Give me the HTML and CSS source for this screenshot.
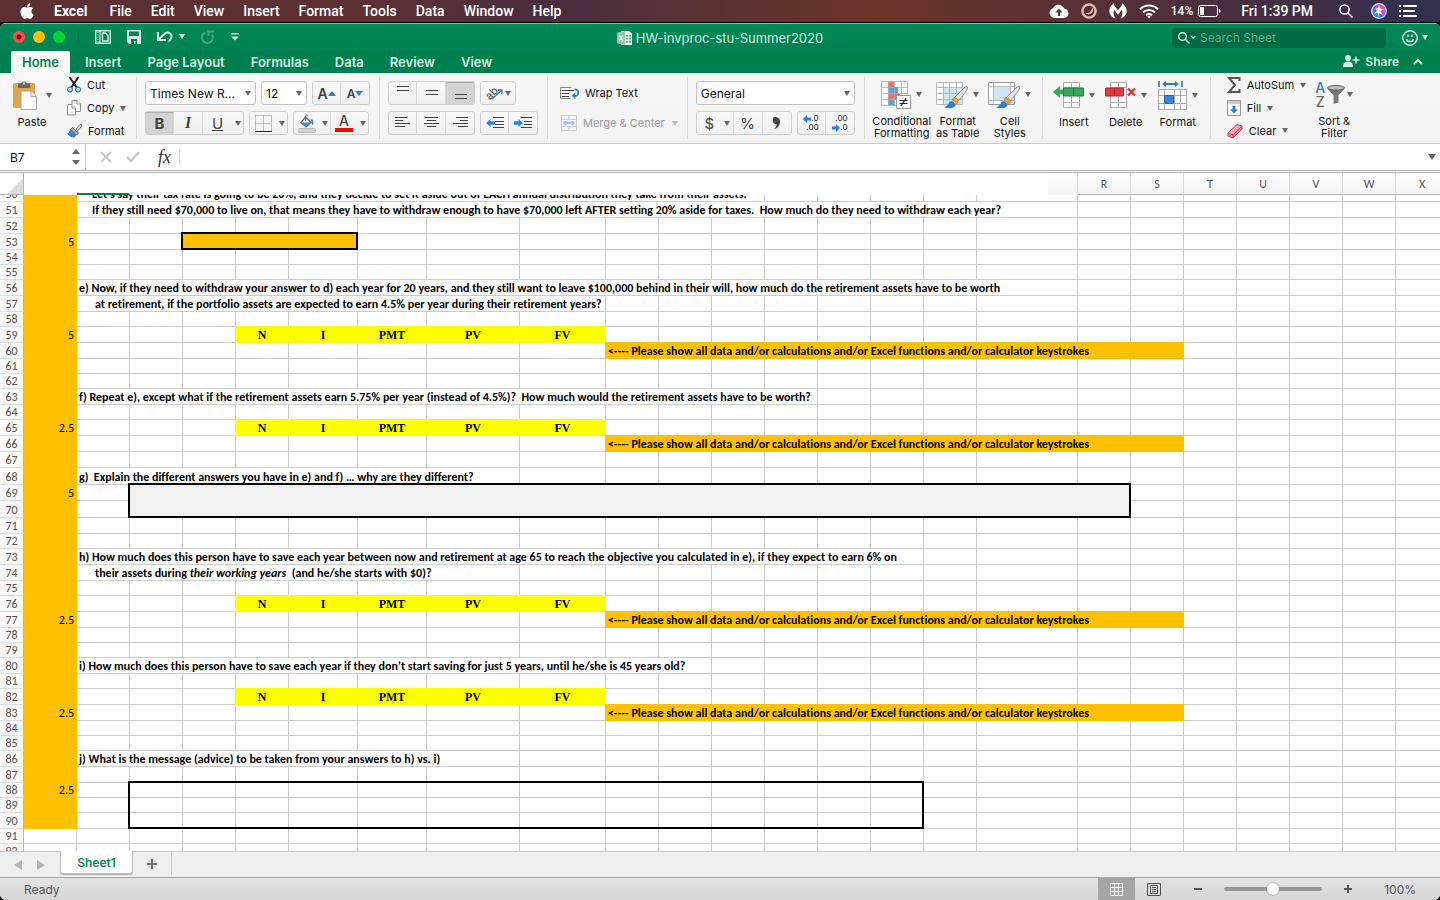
FILE: index.html
```html
<!DOCTYPE html>
<html lang="en">
<head>
  <meta charset="UTF-8" />
  <meta name="viewport" content="width=device-width, initial-scale=1.0"/>
  <title>HW-invproc-stu-Summer2020</title>
  <link rel="stylesheet" href="styles.css">
</head>
<body>
  <header class="menubar">
    <nav class="menus">
      <a href="#" class="apple" aria-label="Apple menu"><svg width="14" height="18" viewBox="0 0 384 512" fill="#fff"><path d="M318.7 268.7c-.2-36.7 16.4-64.4 50-84.8-18.8-26.9-47.2-41.7-84.7-44.6-35.5-2.8-74.3 20.7-88.5 20.7-15 0-49.4-19.7-76.4-19.7C63.3 141.2 4 184.8 4 273.5q0 39.3 14.4 81.2c12.8 36.7 59 126.7 107.2 125.2 25.2-.6 43-17.9 75.8-17.9 31.8 0 48.3 17.9 76.4 17.9 48.6-.7 90.4-82.5 102.6-119.3-65.2-30.7-61.7-90-61.7-91.9zm-56.6-164.2c27.3-32.4 24.8-61.9 24-72.5-24.1 1.4-52 16.4-67.9 34.9-17.5 19.8-27.8 44.3-25.6 71.9 26.1 2 49.9-11.4 69.5-34.3z"/></svg></a>
      <a href="#" class="app">Excel</a>
      <a href="#">File</a>
      <a href="#">Edit</a>
      <a href="#">View</a>
      <a href="#">Insert</a>
      <a href="#">Format</a>
      <a href="#">Tools</a>
      <a href="#">Data</a>
      <a href="#">Window</a>
      <a href="#">Help</a>
    </nav>
    <div class="tray">
      <svg width="20" height="14" viewBox="0 0 20 14"><path d="M5 14a5 5 0 0 1-1-9.700A6 6 0 0 1 15 4.500 4.800 4.800 0 0 1 15.500 14z" fill="#fff"/><path d="M10 4.500l3.500 4H11V12H9V8.500H6.500z" fill="#5b3034"/></svg>
      <svg width="16" height="16" viewBox="0 0 16 16" fill="none"><circle cx="8" cy="8" r="6.600" stroke="#e0b4b0" stroke-width="2.500"/><path d="M11.500 5.500c1 4-2.500 6.500-6 5 3 .2 5.200-1.800 6-5z" fill="#e0b4b0" stroke="#e0b4b0"/></svg>
      <svg width="18" height="16" viewBox="0 0 18 16" fill="#fff"><path d="M5 0C1 3-1 8 1.200 11.500 2.500 13.800 4.500 15 6.500 15.500 4.500 12.500 4.200 9.500 5 6.500L9 12l4-5.500c.8 3 .5 6-1.500 9 2-.5 4-1.700 5.300-4C19 8 17 3 13 0 13.500 3 11 4.500 9 7 7 4.500 4.500 3 5 0z"/></svg>
      <svg width="20" height="15" viewBox="0 0 20 15" fill="none" stroke="#fff" stroke-width="2"><path d="M1 5.200a13 13 0 0 1 18 0M4 8.300a9 9 0 0 1 12 0M7 11.200a4.600 4.600 0 0 1 6 0"/><path d="M8.300 12.600L10 14.500l1.700-1.900a2.500 2.500 0 0 0-3.400 0z" fill="#fff" stroke="none"/></svg>
      <span class="battery">14%<svg width="23" height="12" viewBox="0 0 23 12"><rect x=".5" y=".5" width="19" height="11" rx="2" fill="none" stroke="#fff"/><rect x="2" y="2" width="4" height="8" fill="#fff"/><path d="M21 4c2 .5 2 3.500 0 4z" fill="#fff"/></svg></span>
      <span class="clock">Fri 1:39 PM</span>
      <svg class="spot" width="14" height="14" viewBox="0 0 14 14" fill="none" stroke="#fff" stroke-width="1.500"><circle cx="5.500" cy="5.500" r="4.600"/><path d="M9 9l4.500 4.500"/></svg>
      <svg class="siri" width="16" height="16" viewBox="0 0 16 16"><defs><linearGradient id="siri" x1="0" y1="1" x2="1" y2="0"><stop offset="0" stop-color="#2fb8f0"/><stop offset=".4" stop-color="#3f6fe8"/><stop offset=".65" stop-color="#d04fd0"/><stop offset="1" stop-color="#f0489a"/></linearGradient></defs><circle cx="8" cy="8" r="7.300" fill="url(#siri)" stroke="#e6dcf0" stroke-width="1.300"/><path d="M8 2.500c.5 2.500 1.500 3.500 5 4-2 .5-3 1-3.500 2L12 12 8.500 10 7 14 6.800 9.500 3 11l3-3.500C5 6 4 5.500 3 5.500 6 5.500 7.500 5 8 2.500z" fill="#fff"/></svg>
      <svg width="18" height="12" viewBox="0 0 18 12" fill="#fff"><path d="M0 0h2v2H0zM4 0h14v2H4zM0 5h2v2H0zM4 5h12v2H4zM0 10h2v2H0zM4 10h14v2H4z"/></svg>
    </div>
  </header>

  <div class="window">
    <div class="titlebar">
      <div class="title-left">
        <button class="light red" aria-label="Close"></button>
        <button class="light amber" aria-label="Minimise"></button>
        <button class="light green" aria-label="Full screen"></button>
        <div class="quick">
          <button aria-label="New from template"><svg width="16" height="14" viewBox="0 0 16 14" fill="none" stroke="#d5ebe1"><path d="M.7.7h14.600v12.600H.7z" stroke-width="1.400"/><path d="M5 1v12" stroke-width="1.200"/><path d="M2.800 2v10" stroke-dasharray="1 1.300"/><path d="M7.500 3h3l2.500 2.500V11H7.500z" stroke-width="1.400"/></svg></button>
          <button aria-label="Save"><svg width="14" height="14" viewBox="0 0 14 14"><path d="M0 0h14v14H2l-2-2z" fill="#d5ebe1"/><path d="M2 1.500h10V6H2zM4 9h6v5H8.500v-3H7v3H4z" fill="#008252"/></svg></button>
          <button class="undo" aria-label="Undo"><svg width="16" height="13" viewBox="0 0 16 13" fill="none" stroke="#d5ebe1" stroke-width="2"><path d="M1 2v8h8"/><path d="M1.500 9.500L8 3.500c3-2.500 7 0 6.500 3.500-.3 2-1.500 3.500-3 4.500"/></svg><i class="caret pale"></i></button>
          <button aria-label="Redo"><svg width="14" height="14" viewBox="0 0 14 14" fill="none" stroke="#4aa57f" stroke-width="2"><path d="M4 2.500a5.500 5.500 0 1 0 7 2M7.500 6V1.500H13"/></svg></button>
          <button aria-label="Customise toolbar"><svg width="8" height="8" viewBox="0 0 8 8" fill="#d5ebe1"><path d="M0 0h8v1.400H0zM0 3.500h8L4 7.500z"/></svg></button>
        </div>
      </div>
      <h1 class="doc-title"><svg width="15" height="14" viewBox="0 0 15 14"><path d="M4 0h8l3 2.500V14H4z" fill="#e8f3ee"/><path d="M9 4h2v1.500H9zM12 4h2v1.500h-2zM9 7h2v1.500H9zM12 7h2v1.500h-2zM9 10h2v1.500H9zM12 10h2v1.500h-2z" fill="#58a987"/><path d="M0 1.500l8-1v13l-8-1z" fill="#8cc8ad"/><path d="M2 4l4 6M6 4l-4 6" stroke="#fff" stroke-width="1.400"/></svg>HW-invproc-stu-Summer2020</h1>
      <div class="title-right">
        <label class="search"><svg width="18" height="12" viewBox="0 0 18 12" fill="none" stroke="#cfe8dd" stroke-width="1.400"><circle cx="4.500" cy="4.500" r="3.800"/><path d="M7.500 7.500l4 4M13 4l2.200 2.200L17.400 4"/></svg><input type="text" placeholder="Search Sheet" aria-label="Search Sheet"></label>
        <button class="smile" aria-label="Feedback"><svg width="16" height="16" viewBox="0 0 16 16" fill="none" stroke="#d5ebe1" stroke-width="1.400"><circle cx="8" cy="8" r="7.200"/><path d="M4.500 9c.8 3.500 6.200 3.500 7 0M6 4.500V7M10 4.500V7"/></svg><i class="caret pale"></i></button>
      </div>
    </div>

    <div class="tabs">
      <button class="tab active">Home</button>
      <button class="tab">Insert</button>
      <button class="tab">Page Layout</button>
      <button class="tab">Formulas</button>
      <button class="tab">Data</button>
      <button class="tab">Review</button>
      <button class="tab">View</button>
      <button class="share"><svg width="17" height="12" viewBox="0 0 17 12" fill="#d5ebe1"><circle cx="5" cy="3" r="3"/><path d="M0 12c0-4 2-5.500 5-5.500S10 8 10 12zM12.200 1.500h1.600V4.200h2.700v1.600h-2.700v2.700h-1.600V5.800H9.500V4.200h2.700z"/></svg>Share</button>
      <button class="fold" aria-label="Collapse ribbon"><svg width="10" height="7" viewBox="0 0 10 7" fill="none" stroke="#d5ebe1" stroke-width="2"><path d="M1 6l4-4 4 4"/></svg></button>
    </div>

    <div class="ribbon">
      <div class="group clipboard">
        <button class="big paste">
          <span class="pic"><svg width="24" height="30" viewBox="0 0 24 30"><rect x="0" y="3" width="22" height="25" rx="1.500" fill="#dda552"/><path d="M5 3.500h3a3.200 3.200 0 0 1 6 0h3V8H5z" fill="#666"/><circle cx="11" cy="3.500" r="1.200" fill="#ddd"/><path d="M8 11h10l5.500 5.500v13H8z" fill="#fff" stroke="#aaa"/><path d="M18 11v5.500h5.500" fill="#eee" stroke="#aaa"/></svg><i class="caret"></i></span>
          Paste
        </button>
        <div class="stack">
          <button><svg width="14" height="16" viewBox="0 0 14 16" fill="none"><path d="M2.500 0L10 11M11.500 0L4 11" stroke="#222" stroke-width="2"/><circle cx="3" cy="12.500" r="2.400" stroke="#2d7dd2" stroke-width="1.300"/><circle cx="11" cy="12.500" r="2.400" stroke="#2d7dd2" stroke-width="1.300"/></svg>Cut</button>
          <button><svg width="14" height="16" viewBox="0 0 14 16" fill="#fff" stroke="#8b8b8b"><path d="M5 .5h5L13.500 4v7.500H5z"/><path d="M10 .5V4h3.500"/><path d="M.5 4.500H5L8.500 8v7H.5z"/><path d="M5 4.500V8h3.500"/></svg>Copy<i class="caret"></i></button>
          <button><svg width="15" height="14" viewBox="0 0 15 14"><path d="M9 5l4-4.500c1-.8 2.500.7 1.600 1.700L11 6.500z" fill="#ddd" stroke="#777"/><path d="M5.500 3.500l6 5.500-2 2-6-5.500z" fill="#aaa" stroke="#666"/><path d="M3.500 5.500l6 5.500-2.500 2.500C4 14 2 11.500 0 9.500c1.500 0 2.500-2.500 3.500-4z" fill="#3f7fc1"/></svg>Format</button>
        </div>
      </div>

      <div class="group rows font">
        <div class="row">
          <span class="combo family"><select aria-label="Font"><option>Times New R...</option></select><i class="caret"></i></span>
          <span class="combo size"><select aria-label="Font size"><option>12</option></select><i class="caret"></i></span>
          <span class="seg"><button aria-label="Increase font size"><b class="grow">A</b><i class="tri up"></i></button><button aria-label="Decrease font size"><b class="shrink">A</b><i class="tri down"></i></button></span>
        </div>
        <div class="row">
          <span class="seg"><button class="on" aria-label="Bold"><b>B</b></button><button aria-label="Italic"><em>I</em></button><button class="bare" aria-label="Underline"><u>U</u></button><button class="drop" aria-label="Underline style"><i class="caret"></i></button></span>
          <span class="seg"><button class="bare edge" aria-label="Borders"><svg width="17" height="17" viewBox="0 0 17 17" fill="none" stroke="#888"><path d="M.5.5h16M.5 8.500h16M.5.5v16M8.500.5v16M16.500.5v16" stroke-dasharray="1 1"/><path d="M0 16.500h17" stroke="#222"/></svg></button><button class="drop" aria-label="Border style"><i class="caret"></i></button></span>
          <span class="seg"><button class="narrow bare" aria-label="Fill colour"><svg width="18" height="19" viewBox="0 0 18 19"><path d="M7.500 3L13 8.500l-5 4.500L3 8.500z" fill="#fff" stroke="#666" stroke-width="1.300"/><path d="M4 8.500h8.500L8 12.500z" fill="#3b8ade"/><path d="M7.500 7V2.500c0-2 2.500-2 2.500 0" fill="none" stroke="#666"/><path d="M12.500 5c3 0 3.500 3 2.500 6-2-1-1-4-2.500-6z" fill="#2d7dd2"/><rect x=".5" y="14.500" width="17" height="4" rx="1" fill="#d4d4d4" stroke="#bbb"/></svg></button><button class="drop tint" aria-label="Choose fill"><i class="caret"></i></button><button class="bare edge" aria-label="Font colour"><span class="ink">A</span></button><button class="drop" aria-label="Choose font colour"><i class="caret"></i></button></span>
        </div>
      </div>

      <div class="group rows">
        <div class="row">
          <span class="seg"><button aria-label="Align top"><svg width="17" height="16" viewBox="0 0 17 16" stroke="#444"><path d="M3 1.500h12M3 5.500h12"/></svg></button><button aria-label="Align middle"><svg width="17" height="16" viewBox="0 0 17 16" stroke="#444"><path d="M3 5.500h12M3 9.500h12"/></svg></button><button class="on" aria-label="Align bottom"><svg width="17" height="16" viewBox="0 0 17 16" stroke="#444"><path d="M3 9.500h12M3 13.500h12"/></svg></button></span>
          <span class="seg"><button class="orient" aria-label="Orientation"><span class="slant">ab</span><svg width="12" height="14" viewBox="0 0 12 14" fill="none" stroke="#2d7dd2" stroke-width="1.300"><path d="M1 13L11 4M7 4h4v4"/></svg><i class="caret"></i></button></span>
        </div>
        <div class="row">
          <span class="seg"><button aria-label="Align left"><svg width="17" height="12" viewBox="0 0 17 12" stroke="#444"><path d="M1 .5h12M1 3.500h8M1 6.500h15M1 9.500h10"/></svg></button><button aria-label="Centre"><svg width="17" height="12" viewBox="0 0 17 12" stroke="#444"><path d="M2 .5h13M4 3.500h9M1 6.500h15M4 9.500h9"/></svg></button><button aria-label="Align right"><svg width="17" height="12" viewBox="0 0 17 12" stroke="#444"><path d="M4 .5h12M8 3.500h8M1 6.500h15M6 9.500h10"/></svg></button></span>
          <span class="seg"><button aria-label="Decrease indent"><svg width="18" height="12" viewBox="0 0 18 12"><path d="M7 .5h11M9 4.500h9M9 7.500h9M7 10.500h11" stroke="#444"/><path d="M0 6l4.500-4v2.300H9v3.400H4.500V10z" fill="#2d83dd"/></svg></button><button aria-label="Increase indent"><svg width="18" height="12" viewBox="0 0 18 12"><path d="M7 .5h11M10 4.500h8M10 7.500h8M7 10.500h11" stroke="#444"/><path d="M9 6L4.500 2v2.300H0v3.400h4.500V10z" fill="#2d83dd"/></svg></button></span>
        </div>
      </div>

      <div class="group rows wrap">
        <button class="line"><svg width="20" height="14" viewBox="0 0 20 14" fill="none"><path d="M11.500 1.500H.5v11h10" stroke="#888"/><path d="M2 4.500h12M2 7.500h7M2 10.500h7" stroke="#444"/><path d="M14.500 3.500c5 0 5 6.500.5 6.500" stroke="#2d7dd2" stroke-width="1.800"/><path d="M15.500 6.500V13L11.500 9.800z" fill="#2d7dd2"/></svg>Wrap Text</button>
        <button class="line" disabled><svg width="18" height="16" viewBox="0 0 18 16" fill="none" stroke="#ccc"><path d="M1.500.5h15v15h-15zM1.500 4.500h15M1.500 11.500h15M9 .5v4M9 11.500v4"/><path d="M4 8h10M6 6L4 8l2 2M12 6l2 2-2 2" stroke="#8fbdee" stroke-width="1.300"/></svg>Merge &amp; Center<i class="caret"></i></button>
      </div>

      <div class="group rows number">
        <span class="combo format"><select aria-label="Number format"><option>General</option></select><i class="caret"></i></span>
        <div class="row">
          <span class="seg"><button class="narrow bare" aria-label="Currency">$</button><button class="drop tint" aria-label="Choose currency"><i class="caret"></i></button><button aria-label="Percent">%</button><button aria-label="Comma style"><svg width="8" height="12" viewBox="0 0 8 12" fill="#444"><path d="M1 0c4-.5 6.500 2 6 5.500C6.500 9 4 11.500 1 12c2-2 3-3.500 2.500-5C1.500 7.500 0 6 0 4s0-3.500 1-4z"/></svg></button></span>
          <span class="seg"><button class="dec" aria-label="Increase decimal"><span><svg width="8" height="8" viewBox="0 0 8 8" fill="#2d7dd2"><path d="M0 4l4-4v2.500h4v3H4V8z"/></svg>.0</span><span>.00</span></button><button class="dec" aria-label="Decrease decimal"><span>.00</span><span><svg width="8" height="8" viewBox="0 0 8 8" fill="#2d7dd2"><path d="M8 4L4 0v2.500H0v3h4V8z"/></svg>.0</span></button></span>
        </div>
      </div>

      <div class="group styles">
        <button class="big wide"><span class="pic"><svg width="30" height="28" viewBox="0 0 30 28"><path d="M.5.500h26v24H.5z" fill="#fff"/><path d="M7 1h6v5H7zM7 13h12v6H7z" fill="#f86b6b"/><path d="M7 6h10v7H7zM7 19h6v5H7z" fill="#5b9fe8"/><path d="M.5.500h26v24H.5zM7.500.5v24M13.500.5v24M20.500.5v24M.5 6.500h26M.5 12.500h26M.5 18.500h26" fill="none" stroke="#aaa" stroke-width=".8"/><path d="M15.500 14.500h14v13h-14z" fill="#fff" stroke="#999"/><path d="M18.500 19.500h8M18.500 22.500h8M25 17l-5 8" stroke="#222" stroke-width="1.200"/></svg><i class="caret"></i></span>Conditional<br>Formatting</button>
        <button class="big"><span class="pic"><svg width="32" height="28" viewBox="0 0 32 28"><path d="M.5 1.500h26v22H.5z" fill="#fff"/><path d="M7 7h19v16H7z" fill="#cfe4f8"/><path d="M.5 1.500h26v22H.5zM7.500 1.500v22M13.500 1.500v22M20.500 1.500v22M.5 6.500h26M.5 12.500h26M.5 18.500h26" fill="none" stroke="#aaa" stroke-width=".8"/><path d="M17 18L28 7c2-2 4-2 3.500 0-.5 3-5 8-10.500 14z" fill="#e4e4e4" stroke="#777" stroke-width=".8"/><path d="M17 17c3-1 6 1.500 5 4-1 3-3 3.500-6 3z" fill="#e9a23b" stroke="#a06a20" stroke-width=".5"/><path d="M15 20c2 1 4 2 4.500 4.500C17 28 11 28 8 26c4 0 4-4 7-6z" fill="#2d7dd2"/></svg><i class="caret"></i></span>Format<br>as Table</button>
        <button class="big"><span class="pic"><svg width="32" height="28" viewBox="0 0 32 28"><path d="M.5 1.500h26v22H.5z" fill="#fff" stroke="#999"/><path d="M5 6h17v13H5z" fill="#cfe4f8"/><path d="M5.500 1.500v22M22.500 1.500v22M.5 5.500h26M.5 19.500h26" stroke="#aaa" stroke-width=".8"/><path d="M17 18L28 7c2-2 4-2 3.500 0-.5 3-5 8-10.500 14z" fill="#e4e4e4" stroke="#777" stroke-width=".8"/><path d="M17 17c3-1 6 1.500 5 4-1 3-3 3.500-6 3z" fill="#e9a23b" stroke="#a06a20" stroke-width=".5"/><path d="M15 20c2 1 4 2 4.500 4.500C17 28 11 28 8 26c4 0 4-4 7-6z" fill="#2d7dd2"/></svg><i class="caret"></i></span>Cell<br>Styles</button>
      </div>

      <div class="group cells">
        <button class="big"><span class="pic"><svg width="31" height="28" viewBox="0 0 31 28"><path d="M10.500 1.500h16v25h-16zM10.500 6.500h16M10.500 21.500h16M18.500 1.500v25" fill="#fff" stroke="#aaa"/><path d="M0 11l7-6v3.500h3v5H7V17z" fill="#3ba55a"/><path d="M10.500 7h20v8h-20z" fill="#3ba55a" stroke="#23803e"/><path d="M20.500 7v8" stroke="#23803e"/></svg><i class="caret"></i></span>Insert</button>
        <button class="big"><span class="pic"><svg width="31" height="28" viewBox="0 0 31 28"><path d="M5.500 1.500h16v25h-16zM5.500 6.500h16M5.500 21.500h16M13.500 1.500v25" fill="#fff" stroke="#aaa"/><path d="M.5 7h18v8H.5z" fill="#e0393f" stroke="#b3242b"/><path d="M9.500 7v8" stroke="#b3242b"/><path d="M23 7.500l7 7M30 7.500l-7 7" stroke="#d8323a" stroke-width="2.300"/></svg><i class="caret"></i></span>Delete</button>
        <button class="big"><span class="pic"><svg width="29" height="29" viewBox="0 0 29 29"><path d="M1 0v6M24 0v6" stroke="#2d6fbe" stroke-width="1.600"/><path d="M4 3l4-3v2h9V0l4 3-4 3V4H8v2z" fill="#2d7dd2"/><path d="M.5 8.500h28v20H.5zM6.500 8.500v20M16.500 8.500v20M22.500 8.500v20M.5 14.500h28M.5 22.500h28" fill="#fff" stroke="#aaa"/><path d="M6.500 14.500h9v8h-9z" fill="#3b82d0" stroke="#2a66ad"/></svg><i class="caret"></i></span>Format</button>
      </div>

      <div class="group editing">
        <div class="stack">
          <button><svg width="14" height="16" viewBox="0 0 14 16" fill="none" stroke="#555" stroke-width="2"><path d="M12.500 4V1H2l6 7-6 7h10.500v-3"/></svg>AutoSum<i class="caret"></i></button>
          <button><svg width="14" height="16" viewBox="0 0 14 16"><path d="M.5.500h13v15H.5z" fill="#fff" stroke="#999"/><path d="M1 1h12v3H1z" fill="#ccc"/><path d="M5.500 6h3v3.500H11l-4 4-4-4h2.500z" fill="#2d7dd2"/></svg>Fill<i class="caret"></i></button>
          <button><svg width="16" height="16" viewBox="0 0 16 16"><path d="M1 10L10 1.500l5 1.500-9 9z" fill="#f9a3b3" stroke="#c8506a"/><path d="M1 10l5 2v3L1 13z" fill="#f3859b" stroke="#c8506a"/><path d="M6 12l9-9v3L6 15z" fill="#ee6f89" stroke="#c8506a"/></svg>Clear<i class="caret"></i></button>
        </div>
        <button class="big sort"><span class="pic"><span class="az"><b>A</b><b>Z</b></span><svg width="18" height="20" viewBox="0 0 18 20"><path d="M.5 2.500c0 2 3 5 6 7.500v9l5-1.500V10c3-2.500 6-5.500 6-7.500z" fill="#777"/><ellipse cx="9" cy="2.800" rx="8.500" ry="2.300" fill="#bbb" stroke="#666"/></svg><i class="caret"></i></span>Sort &amp;<br>Filter</button>
      </div>
    </div>

    <div class="formulabar">
      <div class="namebox"><input type="text" value="B7" aria-label="Name box"><span class="spin"><i class="tri up"></i><i class="tri down"></i></span></div>
      <button aria-label="Cancel"><svg width="12" height="12" viewBox="0 0 12 12" stroke="#c6c6c6" stroke-width="2"><path d="M1 1l10 10M11 1L1 11"/></svg></button>
      <button aria-label="Enter"><svg width="14" height="12" viewBox="0 0 14 12" fill="none" stroke="#c6c6c6" stroke-width="2.500"><path d="M1 6l4 4 8-9"/></svg></button>
      <button class="fx" aria-label="Insert function">fx</button>
      <input class="formula" type="text" aria-label="Formula">
      <button class="expand" aria-label="Expand formula bar"><i class="caret large"></i></button>
    </div>

    <main class="sheet" id="sheet">
      <table>
        <colgroup id="cols"></colgroup>
        <thead><tr id="heads"></tr></thead>
        <tbody id="cells"></tbody>
      </table>
    </main>

    <div class="sheetbar">
      <button class="nav" aria-label="Previous sheet"><svg width="8" height="10" viewBox="0 0 8 10" fill="#b4b4b4"><path d="M8 0v10L0 5z"/></svg></button>
      <button class="nav" aria-label="Next sheet"><svg width="8" height="10" viewBox="0 0 8 10" fill="#b4b4b4"><path d="M0 0v10l8-5z"/></svg></button>
      <button class="sheet-tab">Sheet1</button>
      <button class="add" aria-label="Add sheet"><svg width="10" height="10" viewBox="0 0 10 10" stroke="#555" stroke-width="1.600"><path d="M5 0v10M0 5h10"/></svg></button>
    </div>

    <footer class="statusbar">
      <span class="ready">Ready</span>
      <button class="view on" aria-label="Normal view"><svg width="13" height="13" viewBox="0 0 13 13" fill="none" stroke="#fff"><path d="M.5.500h12v12H.5zM4.500.5v12M8.500.5v12M.5 4.500h12M.5 8.500h12"/></svg></button>
      <button class="view" aria-label="Page layout view"><svg width="14" height="13" viewBox="0 0 14 13" fill="none" stroke="#555"><path d="M.5.500h13v12H.5zM3.500 2.500h7v8h-7zM5 4.500h4M5 6.500h4M5 8.500h4"/></svg></button>
      <button class="zoom" aria-label="Zoom out"><svg width="8" height="8" viewBox="0 0 8 8" stroke="#555" stroke-width="2"><path d="M0 4h8"/></svg></button>
      <input class="slider" type="range" min="0" max="100" value="50" aria-label="Zoom">
      <button class="zoom" aria-label="Zoom in"><svg width="8" height="8" viewBox="0 0 8 8" stroke="#555" stroke-width="2"><path d="M0 4h8M4 0v8"/></svg></button>
      <span class="percent">100%</span>
    </footer>
  </div>
  <script src="sheet.js"></script>
</body>
</html>
```
FILE: styles.css
```css
* { margin: 0; padding: 0; box-sizing: border-box; }
body {
  font-family: Inter, "Liberation Sans", sans-serif;
  font-size: 11px;
  color: #111;
  background: #000;
  height: 100vh;
  display: flex;
  flex-direction: column;
  overflow: hidden;
}
button {
  font: inherit;
  color: inherit;
  background: none;
  border: none;
  display: flex;
  align-items: center;
  justify-content: center;
}
input, select { font: inherit; color: inherit; border: none; background: none; outline: none; min-width: 0; }
svg { flex: none; display: block; }
a { color: inherit; text-decoration: none; }

.caret {
  flex: none;
  border: 3px solid transparent;
  border-top: 5px solid #666;
  border-bottom: none;
}
.caret.pale { border-top-color: #d5ebe1; }
.caret.large { border-width: 6px 4px 0; }
.tri { flex: none; border: 4px solid transparent; }
.tri.up { border-top: none; border-bottom: 5px solid #2d7dd2; }
.tri.down { border-bottom: none; border-top: 5px solid #2d7dd2; }

/* menu bar */
.menubar {
  height: 22px;
  flex: none;
  display: flex;
  justify-content: space-between;
  align-items: center;
  padding: 0 23px 0 20px;
  color: #fff;
  font-size: 14px;
  font-weight: 500;
  font-family: Roboto, sans-serif;
  background: linear-gradient(90deg, #5c2f32 0%, #5c3033 25%, #482e3e 38%, #6b3428 61%, #5b3034 73%, #452f40 87%, #2f3150 100%);
}
.menus, .tray { display: flex; align-items: center; }
.menus { gap: 19px; }
.menus .app { font-weight: 700; padding: 0 3px 0 1px; }
.tray { gap: 12px; }
.battery { display: flex; align-items: center; gap: 5px; font-size: 12px; }
.clock { padding: 0 14px 0 8px; }
.siri { margin-left: 6px; }

/* window */
.window {
  flex: 1;
  min-height: 0;
  margin-top: 1px;
  display: flex;
  flex-direction: column;
  border-radius: 6px;
  overflow: hidden;
  background: #fff;
}
.titlebar {
  height: 28px;
  flex: none;
  display: grid;
  grid-template-columns: 1fr auto 1fr;
  align-items: center;
  background: linear-gradient(#008856, #008252);
  border-top: 1px solid #7fc0a5;
  color: #d5ebe1;
}
.title-left { display: flex; align-items: center; gap: 8px; padding: 0 0 2px 13px; }
.light { width: 12px; height: 12px; border-radius: 50%; }
.red { background: radial-gradient(circle, #6b0a08 2px, #ff4b47 3px); }
.amber { background: #ffbe0a; }
.green { background: #07d136; }
.quick { display: flex; align-items: center; gap: 16px; padding-left: 16px; margin-left: 5px; border-left: 1px solid #007a4b; }
.undo { gap: 6px; }
.doc-title { display: flex; align-items: center; gap: 4px; font-size: 13px; font-weight: 400; }
.title-right { display: flex; align-items: center; justify-content: flex-end; gap: 16px; padding-right: 12px; }
.search {
  width: 214px;
  height: 20px;
  display: flex;
  align-items: center;
  gap: 4px;
  padding: 0 6px;
  border-radius: 3px;
  background: #006b42;
  font-size: 12px;
}
.search input { flex: 1; }
.search input::placeholder { color: #63a98b; opacity: 1; }
.smile { gap: 4px; }

.tabs {
  height: 22px;
  flex: none;
  display: flex;
  padding: 0 17px 0 11px;
  background: #007f4e;
  color: #d5ebe1;
  font-size: 13px;
  font-weight: 600;
}
.tab { padding: 0 13px; }
.tab.active { background: #f9f9f9; color: #0b7d4d; padding: 0 11px; margin-right: 2px; border-radius: 2px 2px 0 0; }
.share { margin-left: auto; gap: 5px; padding-bottom: 2px; font-size: 12px; }
.fold { margin-left: 14px; padding-bottom: 2px; }

/* ribbon */
.ribbon {
  height: 71px;
  flex: none;
  display: flex;
  background: linear-gradient(#f8f8f8, #f3f3f3);
  border-bottom: 1px solid #c9c9c9;
}
.group { display: flex; border-right: 1px solid #dcdcdc; margin: 4px 0; height: 62px; }
.group:last-child { border-right: none; }
.rows { flex-direction: column; gap: 6px; padding: 4px 9px 4px 8px; }
.row { display: flex; gap: 5px; }
.stack { display: flex; flex-direction: column; margin: -3px 0; }
.stack button { height: 23px; justify-content: flex-start; gap: 6px; }

.clipboard { padding-left: 6px; width: 137px; }
.clipboard .stack { margin-left: 9px; }
.editing { padding-left: 16px; }
.big {
  width: 52px;
  flex-direction: column;
  justify-content: flex-start;
  padding-top: 2px;
  line-height: 12px;
}
.big.wide { width: 60px; }
.pic { display: flex; align-items: center; justify-content: center; gap: 5px; height: 32px; margin-bottom: 5px; }
.paste .pic { gap: 9px; }
.styles { padding: 0 6px 0 7px; }
.cells { padding: 0 6px 0 5px; }

.seg {
  display: flex;
  height: 24px;
  border: 1px solid #cdcdcd;
  border-radius: 3px;
  background: linear-gradient(#f9f9f9, #f0f0f0);
  font-size: 15px;
  color: #444;
}
.seg button { width: 29px; border-right: 1px solid #d8d8d8; }
.seg button:last-child { border-right: none; width: 28px; }
.seg button:first-child { width: 28px; }
.seg button.bare { border-right: none; }
.seg button.narrow { width: 25px; }
.seg button.edge { width: 26px; }
.seg button.drop, .seg button.drop:last-child { width: 11px; }
.seg button.tint { width: 12px; border-right: 1px solid #d8d8d8; }
.seg button.on { background: #d4d4d4; box-shadow: inset 0 1px 1px #aaa; }
.seg em { font-family: "Liberation Serif", serif; font-weight: 700; font-size: 16px; }
.seg button.orient { width: 34px; gap: 2px; }
.seg .grow { font-size: 14px; font-weight: 600; }
.seg .shrink { font-size: 12px; font-weight: 600; }
.slant { font-size: 11px; transform: rotate(-45deg); margin-right: -8px; }
.ink { font-size: 14px; line-height: 14px; font-weight: 500; padding: 0 4px; border-bottom: 4px solid #f00; }
.seg button.dec { flex-direction: column; font-size: 8px; line-height: 9px; align-items: flex-end; padding-right: 6px; font-weight: 500; }
.dec span { display: flex; align-items: center; }

.combo {
  height: 24px;
  display: flex;
  align-items: center;
  padding-right: 4px;
  border: 1px solid #c4c4c4;
  border-radius: 3px;
  background: #fff;
  font-size: 12px;
}
.combo select { flex: 1; appearance: none; height: 22px; padding-left: 4px; }
.combo .caret { margin-left: 4px; }
.family { width: 111px; }
.size { width: 46px; }
.format { width: 159px; }

.wrap { padding: 4px 9px 4px 12px; }
.line { height: 24px; gap: 5px; justify-content: flex-start; }
.line:disabled { color: #9a9a9a; }
.line:disabled .caret { border-top-color: #bbb; margin-left: 2px; }
.sort { margin-left: 2px; }
.sort .pic { gap: 2px; }
.az { display: flex; flex-direction: column; font-size: 14px; line-height: 14px; color: #666; }
.az b { font-weight: 500; }
.az b:first-child { color: #2d7dd2; }

/* formula bar */
.formulabar {
  height: 29px;
  flex: none;
  display: flex;
  align-items: center;
  border-bottom: 3px double #b0b0b0;
  background: #fff;
}
.namebox {
  width: 86px;
  align-self: stretch;
  display: flex;
  align-items: center;
  padding: 0 5px 0 10px;
  border-right: 1px solid #c4c4c4;
  font-size: 12px;
}
.namebox input { flex: 1; }
.spin { display: flex; flex-direction: column; gap: 6px; }
.spin .up { border-bottom-color: #666; }
.spin .down { border-top-color: #666; }
.formulabar button { margin-left: 14px; }
.formulabar .fx { font: italic 18px/20px "Liberation Serif", serif; color: #333; margin-left: 18px; }
.formula { flex: 1; height: 16px; border-left: 1px solid #ddd; margin-left: 8px; }
.formulabar .expand { margin: 0 4px; }

/* grid */
.sheet {
  flex: 1;
  min-height: 0;
  overflow: hidden;
  background: #fff;
  font-family: Carlito, Lato, sans-serif;
  font-variant-ligatures: none;
}
table { border-collapse: separate; border-spacing: 0; table-layout: fixed; width: 1448px; }
.c-head { width: 24px; }
.c-std { width: 53px; }
.c-69 { width: 69px; }
.c-93 { width: 93px; }
.c-86 { width: 86px; }
.c-101 { width: 101px; }
th { font-weight: 400; color: #555; font-size: 12px; }
thead th {
  position: sticky;
  top: 0;
  z-index: 2;
  height: 22px;
  background: linear-gradient(#fff, #f4f4f4);
  border-right: 1px solid #dcdcdc;
  border-bottom: 1px solid #b4b4b4;
}
thead th.blank { background: #fff; border-color: #fff; }
thead th.picked { border-bottom: 2px solid #0b7d4d; }
thead th.half { background: linear-gradient(90deg, #fff 71px, transparent 71px), linear-gradient(#fff, #f4f4f4); border-bottom: none; }
thead th.corner { background: linear-gradient(135deg, #fff 65%, #dcdcdc 65%); border-right-color: #b4b4b4; }
tbody th {
  border-right: 1px solid #b4b4b4;
  border-bottom: 1px solid #dcdcdc;
  background: #fafafa;
}
tbody tr { height: 15px; }
tbody tr.h16 { height: 16px; }
tbody tr.h17 { height: 17px; }
td {
  border-right: 1px solid #cbcbcb;
  border-bottom: 1px solid #cbcbcb;
  font-size: 12px;
  font-weight: 700;
  color: #000;
  white-space: pre;
}
td, tbody th { line-height: 14px; vertical-align: bottom; }
.points { background: #ffc000; border-color: #ffc000; text-align: right; padding-right: 2px; font-weight: 400; }
.q { padding-left: 2px; }
.in1 { padding-left: 15px; }
.in2 { padding-left: 18px; }
.key {
  background: #fbff00;
  border-color: #fbff00;
  box-shadow: -1px 0 #fbff00, 0 -1px #fbff00, -1px -1px #fbff00;
  font: 700 12px/14px "Liberation Serif", serif;
  text-align: center;
}
.hint {
  background: #ffc000;
  border-color: #ffc000;
  box-shadow: -1px 0 #ffc000, 0 -1px #ffc000, -1px -1px #ffc000;
  padding-left: 2px;
}
.answer, .essay {
  position: relative;
  background: #ffc000;
  border-right: 2px solid #000;
  border-bottom: 2px solid #000;
  box-shadow: -2px 0 #000, 0 -2px #000, -2px -2px #000;
}
.essay { background: #f0f0f0; }
.bt { box-shadow: 0 -2px #000; }
.bl { box-shadow: -2px 0 #000; }
.bt.bl { box-shadow: -2px 0 #000, 0 -2px #000, -2px -2px #000; }

/* sheet tabs and status */
.sheetbar {
  height: 26px;
  flex: none;
  display: flex;
  align-items: flex-start;
  background: #efefef;
  border-top: 1px solid #cbcbcb;
}
.nav { width: 8px; height: 25px; margin-left: 14px; }
.nav + .nav { margin-left: 15px; }
.sheet-tab {
  height: 23px;
  width: 73px;
  margin: -1px 0 0 15px;
  background: #fff;
  border: 1px solid #c4c4c4;
  border-top: none;
  border-radius: 0 0 3px 3px;
  box-shadow: 0 1px 1px #aaa;
  color: #0b8a55;
  font-size: 12px;
  font-weight: 600;
}
.add { width: 39px; height: 23px; border-right: 1px solid #c9c9c9; }
.statusbar {
  height: 23px;
  flex: none;
  display: flex;
  align-items: center;
  background: linear-gradient(#e3e3e3, #d6d6d6);
  border-top: 1px solid #a4a4a4;
  color: #555;
  font-size: 12px;
  padding: 0 24px;
}
.ready { flex: 1; }
.view { width: 37px; height: 22px; }
.view.on { background: #a5a5a5; }
.zoom { margin: 0 22px; }
.slider { appearance: none; width: 98px; height: 14px; }
.slider::-webkit-slider-runnable-track { height: 4px; border-radius: 2px; background: #999; }
.slider::-webkit-slider-thumb {
  appearance: none;
  width: 12px;
  height: 12px;
  margin-top: -4px;
  border-radius: 50%;
  background: #fff;
  box-shadow: 0 0 2px #777;
}
.percent { width: 42px; text-align: right; }
```
FILE: sheet.js
```js
const COLS = 'ABCDEFGHIJKLMNOPQRSTUVWX'.split('');
const WIDTH_CLASS = { F: 'c-69', G: 'c-69', H: 'c-93', I: 'c-86', Q: 'c-101' };
const FIRST_ROW = 50;
const LAST_ROW = 93;
const H16 = [50, 51, 52, 53, 56, 57, 59, 60, 63, 65, 66, 67, 69, 71, 73, 74, 76, 77, 80, 82, 83, 86, 87, 90];
const H17 = [68, 70];

const points = { 53: '5', 59: '5', 65: '2.5', 69: '5', 77: '2.5', 83: '2.5', 88: '2.5' };

// cell address -> text, number of columns, number of rows, class
const cells = {
  B50: { text: 'Let’s say their tax rate is going to be 20%, and they decide to set it aside out of EACH annual distribution they take from their assets.', span: 11, cls: 'in1' },
  B51: { text: 'If they still need $70,000 to live on, that means they have to withdraw enough to have $70,000 left AFTER setting 20% aside for taxes.  How much do they need to withdraw each year?', span: 16, cls: 'in1' },
  D53: { span: 3, cls: 'answer' },
  B56: { text: 'e) Now, if they need to withdraw your answer to d) each year for 20 years, and they still want to leave $100,000 behind in their will, how much do the retirement assets have to be worth', span: 16, cls: 'q' },
  B57: { text: 'at retirement, if the portfolio assets are expected to earn 4.5% per year during their retirement years?', span: 8, cls: 'in2' },
  B63: { text: 'f) Repeat e), except what if the retirement assets earn 5.75% per year (instead of 4.5%)?  How much would the retirement assets have to be worth?', span: 12, cls: 'q' },
  B68: { text: 'g)  Explain the different answers you have in e) and f) … why are they different?', span: 7, cls: 'q' },
  C69: { span: 16, rows: 2, cls: 'essay' },
  B73: { text: 'h) How much does this person have to save each year between now and retirement at age 65 to reach the objective you calculated in e), if they expect to earn 6% on', span: 14, cls: 'q' },
  B74: { text: 'their assets during <i>their working years</i>  (and he/she starts with $0)?', span: 7, cls: 'in2' },
  B80: { text: 'i) How much does this person have to save each year if they don’t start saving for just 5 years, until he/she is 45 years old?', span: 10, cls: 'q' },
  B86: { text: 'j) What is the message (advice) to be taken from your answers to h) vs. i)', span: 7, cls: 'q' }
};

[59, 65, 76, 82].forEach(n => {
  ['N', 'I', 'PMT', 'PV', 'FV'].forEach((name, i) => {
    cells['EFGHI'[i] + n] = { text: name, cls: 'key' };
  });
  cells['J' + (n + 1)] = {
    text: '&lt;---- Please show all data and/or calculations and/or Excel functions and/or calculator keystrokes',
    span: 10,
    cls: 'hint'
  };
});

// outline of C88:O90, drawn as top edges of rows 88 and 91 and left edges of C and P
'CDEFGHIJKLMNO'.split('').forEach(c => {
  cells[c + 88] = { cls: 'bt' };
  cells[c + 91] = { cls: 'bt' };
});
cells.C88.cls = 'bt bl';
['C89', 'C90', 'P88', 'P89', 'P90'].forEach(key => {
  cells[key] = { cls: 'bl' };
});

document.getElementById('cols').innerHTML =
  '<col class="c-head">' + COLS.map(c => `<col class="${WIDTH_CLASS[c] || 'c-std'}">`).join('');

document.getElementById('heads').innerHTML = '<th class="corner"></th>' + COLS.map(c => {
  if (c === 'B') return '<th class="blank picked"></th>';
  if (c === 'Q') return '<th class="half"></th>';
  if (c < 'Q') return '<th class="blank"></th>';
  return `<th>${c}</th>`;
}).join('');

const covered = new Set();
let html = '';
for (let n = FIRST_ROW; n <= LAST_ROW; n++) {
  const height = H17.includes(n) ? 'h17' : H16.includes(n) ? 'h16' : '';
  html += `<tr class="${height}"><th>${n}</th>`;
  COLS.forEach((c, i) => {
    const key = c + n;
    if (covered.has(key)) return;
    if (c === 'A' && n <= 90) {
      html += `<td class="points">${points[n] || ''}</td>`;
      return;
    }
    const cell = cells[key] || {};
    const span = cell.span || 1;
    const rows = cell.rows || 1;
    for (let r = 0; r < rows; r++) {
      for (let s = 0; s < span; s++) covered.add(COLS[i + s] + (n + r));
    }
    html += `<td class="${cell.cls || ''}" colspan="${span}" rowspan="${rows}">${cell.text || ''}</td>`;
  });
  html += '</tr>';
}
document.getElementById('cells').innerHTML = html;

// first visible row is partly scrolled under the headings
document.getElementById('sheet').scrollTop = 9;
```
